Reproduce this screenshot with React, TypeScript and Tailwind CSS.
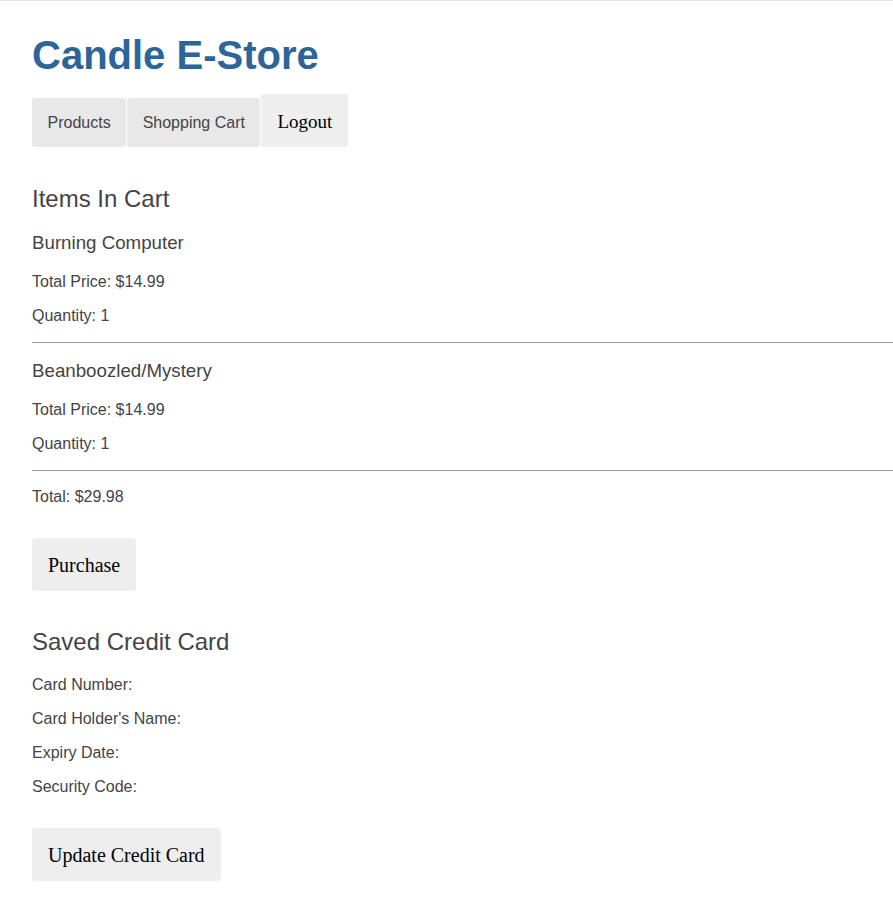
import React from "react";

const sans = "font-['Liberation_Sans',Arial,sans-serif]";
const serif = "font-['Liberation_Serif','Times_New_Roman',serif]";

const cartItems = [
  { name: "Burning Computer", price: "$14.99", quantity: 1 },
  { name: "Beanboozled/Mystery", price: "$14.99", quantity: 1 },
];

const ActionButton: React.FC<{ label: string; className?: string }> = ({
  label,
  className = "",
}) => (
  <button
    className={`block rounded-[3px] bg-[#eeeeee] px-4 pt-4 pb-[14px] text-[20px] leading-[23px] text-black ${serif} ${className}`}
  >
    {label}
  </button>
);

const App: React.FC = () => {
  return (
    <div className={`min-h-[918px] border-t border-[#e5e5e5] bg-white text-[#444] ${sans}`}>
      <div className="pl-8">
        {/* Header */}
        <h1 className="mt-[31px] text-[40px] font-bold leading-[46px] text-[#2e6599]">
          Candle E-Store
        </h1>
        <nav className="mt-4 flex items-end">
          <a className="rounded-[3px] bg-[#e8e8e8] px-[15.5px] py-4 text-[16px] leading-[17px] text-[#444]">
            Products
          </a>
          <a className="ml-px rounded-[3px] bg-[#e8e8e8] px-[15.5px] py-4 text-[16px] leading-[17px] text-[#444]">
            Shopping Cart
          </a>
          <button
            className={`ml-px rounded-[3px] bg-[#eeeeee] px-4 pt-4 pb-[14px] text-[19px] leading-[23px] text-black ${serif}`}
          >
            Logout
          </button>
        </nav>

        {/* Cart */}
        <h2 className="mt-[38px] text-[24px] leading-[28px]">Items In Cart</h2>
        <div className="mt-[19px]">
          {cartItems.map((item) => (
            <div key={item.name}>
              <h3 className="text-[18.72px] leading-[22px]">{item.name}</h3>
              <p className="mt-[19px] text-[16px] leading-[18px]">
                Total Price: {item.price}
              </p>
              <p className="mt-4 text-[16px] leading-[18px]">
                Quantity: {item.quantity}
              </p>
              <hr className="mt-[17px] mb-[17px] border-t border-[#999]" />
            </div>
          ))}
        </div>
        <p className="text-[16px] leading-[18px]">Total: $29.98</p>
        <ActionButton label="Purchase" className="mt-8" />

        {/* Credit card */}
        <h2 className="mt-[37px] text-[24px] leading-[28px]">Saved Credit Card</h2>
        <div className="mt-5 flex flex-col gap-4 text-[16px] leading-[18px]">
          <p>Card Number:</p>
          <p>Card Holder's Name:</p>
          <p>Expiry Date:</p>
          <p>Security Code:</p>
        </div>
        <ActionButton label="Update Credit Card" className="mt-8" />
      </div>
    </div>
  );
};

export default App;
